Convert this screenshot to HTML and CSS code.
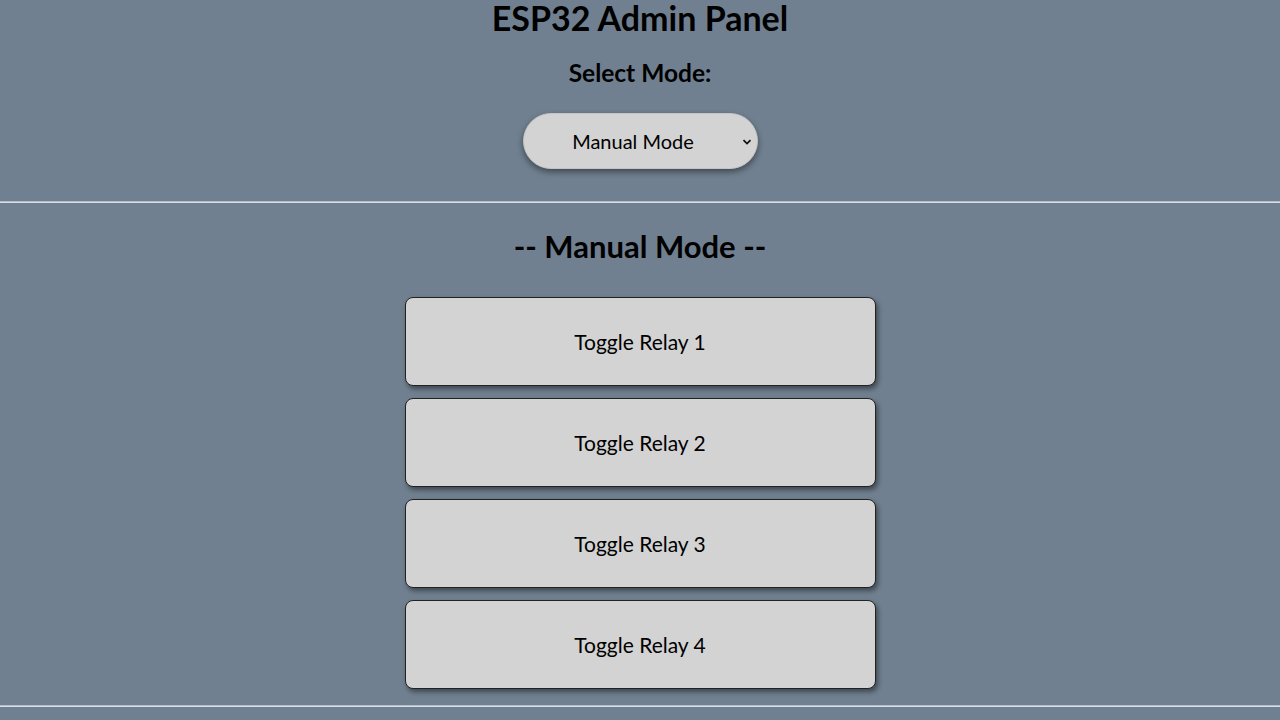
FILE: index.html
```html
<!DOCTYPE html>
<html>
<head>
<meta charset="utf-8">
<title>ESP32 Admin Panel</title>
<link rel="stylesheet" href="styles.css">
</head>
<body>
<header class="top">
  <h1 class="title">ESP32 Admin Panel</h1>
  <h3 class="label">Select Mode:</h3>
  <div class="select-wrap">
    <select class="mode-select">
      <option>Manual Mode</option>
      <option>Auto Mode</option>
    </select>
    <svg class="chev" width="10" height="8" viewBox="0 0 10 8"><path d="M1.5 2.2 L5 5.6 L8.5 2.2" fill="none" stroke="#111" stroke-width="1.8"/></svg>
  </div>
</header>
<hr class="rule rule-top">
<section class="manual">
  <h2 class="section-title">-- Manual Mode --</h2>
  <div class="buttons">
    <button class="relay">Toggle Relay 1</button>
    <button class="relay">Toggle Relay 2</button>
    <button class="relay">Toggle Relay 3</button>
    <button class="relay">Toggle Relay 4</button>
  </div>
</section>
<hr class="rule rule-bottom">
</body>
</html>
```
FILE: styles.css
```css
html, body {
  margin: 0;
  padding: 0;
}
body {
  background: #708090;
  font-family: "Lato", "DejaVu Sans", sans-serif;
  color: #000;
  text-align: center;
}
.top {
  display: flex;
  flex-direction: column;
  align-items: center;
}
.title {
  margin: 0;
  font-size: 34px;
  line-height: 36px;
  font-weight: 700;
}
.label {
  margin: 24px 0 0;
  font-size: 24.5px;
  line-height: 26px;
  font-weight: 700;
}
.select-wrap {
  position: relative;
  margin-top: 27px;
  width: 235px;
  height: 56px;
}
.mode-select {
  appearance: none;
  -webkit-appearance: none;
  width: 235px;
  height: 56px;
  border: 1px solid #c4c4c4;
  border-radius: 28px;
  background: #d3d3d3;
  box-shadow: 0 3px 6px rgba(0, 0, 0, 0.45);
  font-family: inherit;
  font-size: 20px;
  color: #000;
  padding: 0 28px 0 14px;
  text-align: center;
  text-align-last: center;
}
.chev {
  position: absolute;
  right: 6px;
  top: 25px;
}
.rule {
  margin: 0;
  height: 0;
  border: none;
  border-top: 1px solid #b4bec8;
  border-bottom: 1px solid #d8dee4;
}
.rule-top {
  margin-top: 32px;
}
.manual {
  display: flex;
  flex-direction: column;
  align-items: center;
}
.section-title {
  margin: 27px 0 0;
  font-size: 31px;
  line-height: 32px;
  font-weight: 700;
}
.buttons {
  margin-top: 35px;
  display: flex;
  flex-direction: column;
  gap: 12px;
}
.relay {
  width: 471px;
  height: 89px;
  background: #d3d3d3;
  border: 1px solid #222;
  border-radius: 8px;
  box-shadow: 2px 3px 5px rgba(0, 0, 0, 0.45);
  font-family: inherit;
  font-size: 21px;
  color: #000;
}
.rule-bottom {
  margin-top: 16px;
}
```
